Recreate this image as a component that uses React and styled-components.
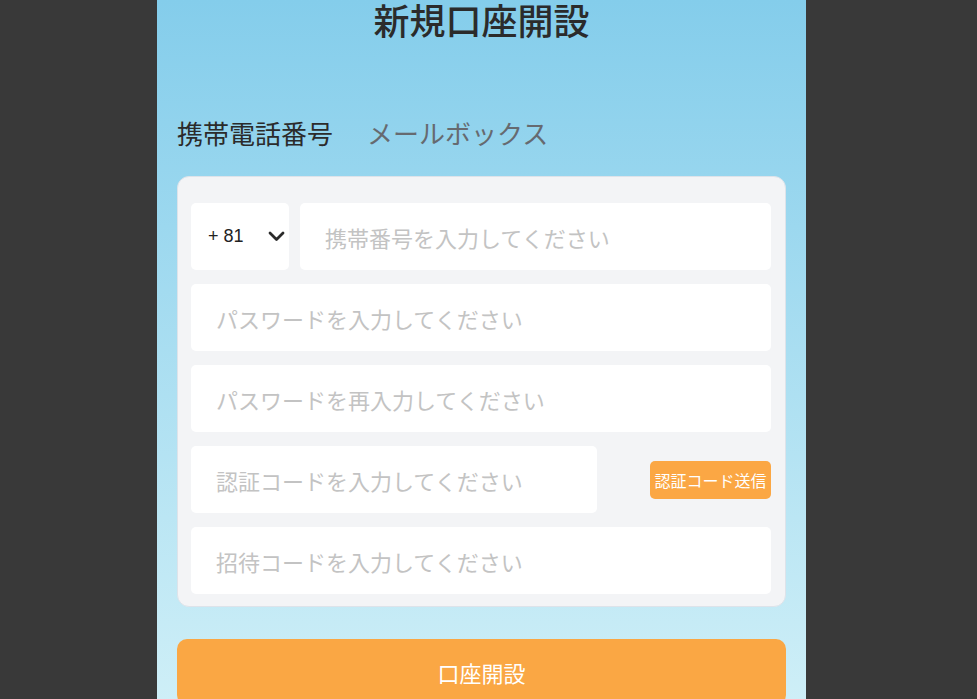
import styled, { createGlobalStyle } from "styled-components";

const GlobalStyle = createGlobalStyle`
  html, body {
    margin: 0;
    padding: 0;
    background: #393939;
    font-family: "Noto Sans CJK JP", "Noto Sans", sans-serif;
  }
  * { box-sizing: border-box; }
`;

export default function App() {
  return (
    <>
      <GlobalStyle />
      <Page>
        <Panel>
          <Title>新規口座開設</Title>
          <Tabs>
            <Tab active>携帯電話番号</Tab>
            <Tab>メールボックス</Tab>
          </Tabs>
          <Card>
            <Row>
              <CountrySelect>
                <span>+ 81</span>
                <svg width="17" height="11" viewBox="0 0 17 11" fill="none" stroke="#2a2a2a" strokeWidth="2.8" strokeLinecap="round" strokeLinejoin="round">
                  <polyline points="2 2 8.5 8.5 15 2" />
                </svg>
              </CountrySelect>
              <Field grow placeholder="携帯番号を入力してください" />
            </Row>
            <Field type="password" placeholder="パスワードを入力してください" />
            <Field type="password" placeholder="パスワードを再入力してください" />
            <Row>
              <Field narrow placeholder="認証コードを入力してください" />
              <SendButton>認証コード送信</SendButton>
            </Row>
            <Field placeholder="招待コードを入力してください" />
          </Card>
          <SubmitButton>口座開設</SubmitButton>
        </Panel>
      </Page>
    </>
  );
}

const Page = styled.div`
  display: flex;
  justify-content: center;
  min-height: 100vh;
  padding-right: 14px;
`;

const Panel = styled.main`
  width: 649px;
  min-height: 100vh;
  padding: 0 20px 40px 20px;
  background: linear-gradient(180deg, #84cdeb 0%, #d3f1f8 100%);
  display: flex;
  flex-direction: column;
`;

const Title = styled.h1`
  margin: 0;
  text-align: center;
  font-size: 36px;
  line-height: 38px;
  font-weight: 500;
  color: #2b2b2b;
`;

const Tabs = styled.div`
  display: flex;
  gap: 34px;
  margin-top: 76px;
  margin-bottom: 24px;
`;

const Tab = styled.div`
  font-size: 26px;
  line-height: 38px;
  color: ${(p) => (p.active ? "#2b2b2b" : "#666a70")};
`;

const Card = styled.section`
  background: #f3f4f6;
  border: 1px solid #dde3ea;
  border-radius: 12px;
  padding: 26px 14px 12px 13px;
  display: flex;
  flex-direction: column;
  gap: 14px;
`;

const Row = styled.div`
  display: flex;
  align-items: center;
  gap: 11px;
`;

const CountrySelect = styled.div`
  width: 98px;
  height: 67px;
  flex-shrink: 0;
  background: #fff;
  border-radius: 5px;
  display: flex;
  align-items: center;
  justify-content: space-between;
  padding: 0 4px 0 17px;
  font-family: "Liberation Sans", Arial, sans-serif;
  font-size: 18px;
  color: #222;
`;

const Field = styled.input`
  display: block;
  height: 67px;
  flex: ${(p) => (p.narrow ? "0 0 406px" : p.grow ? "1 1 auto" : "0 0 67px")};
  width: ${(p) => (p.grow ? "auto" : "100%")};
  min-width: 0;
  border: none;
  outline: none;
  border-radius: 5px;
  background: #fff;
  padding: 0 25px;
  font-family: "Noto Sans CJK JP", "Noto Sans", sans-serif;
  font-size: 22px;
  color: #333;

  &::placeholder {
    color: #c3c3c3;
  }
`;

const SendButton = styled.button`
  margin-left: auto;
  height: 38px;
  width: 121px;
  padding: 0;
  border: none;
  border-radius: 5px;
  background: #fba744;
  color: #fff;
  font-family: "Noto Sans CJK JP", "Noto Sans", sans-serif;
  font-size: 16px;
  white-space: nowrap;
  cursor: pointer;
`;

const SubmitButton = styled.button`
  margin-top: 32px;
  height: 66px;
  flex-shrink: 0;
  border: none;
  border-radius: 10px;
  background: #faa744;
  color: #fff;
  font-family: "Noto Sans CJK JP", "Noto Sans", sans-serif;
  font-size: 22px;
  cursor: pointer;
`;
